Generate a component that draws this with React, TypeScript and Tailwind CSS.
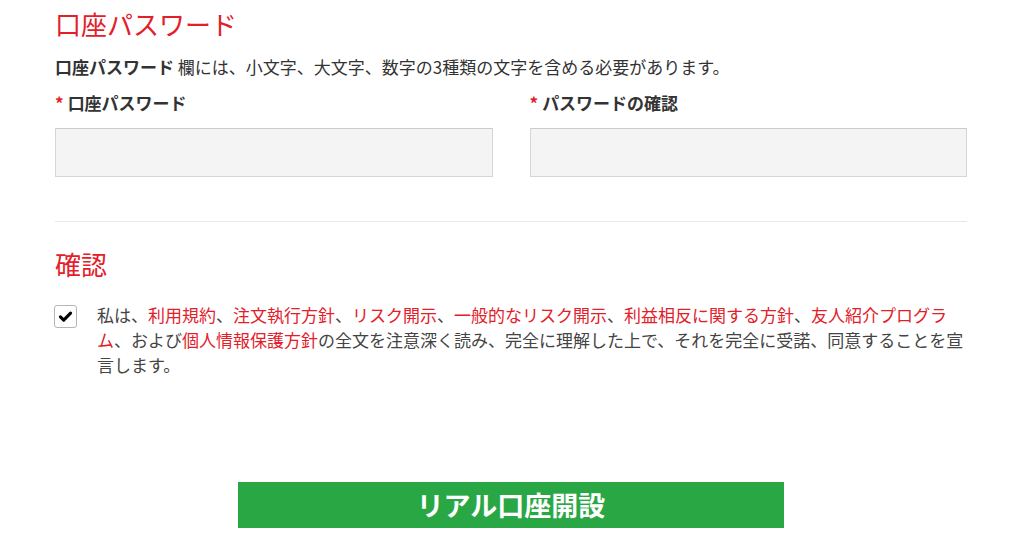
const LINKS_LINE = [
  { text: '私は、', link: false },
  { text: '利用規約', link: true },
  { text: '、', link: false },
  { text: '注文執行方針', link: true },
  { text: '、', link: false },
  { text: 'リスク開示', link: true },
  { text: '、', link: false },
  { text: '一般的なリスク開示', link: true },
  { text: '、', link: false },
  { text: '利益相反に関する方針', link: true },
  { text: '、', link: false },
  { text: '友人紹介プログラム', link: true },
  { text: '、および', link: false },
  { text: '個人情報保護方針', link: true },
  { text: 'の全文を注意深く読み、完全に理解した上で、それを完全に受諾、同意することを宣言します。', link: false },
];

function Field({ label }: { label: string }) {
  return (
    <label className="flex flex-col">
      <span className="text-[17px] leading-[25px] font-bold text-[#333]">
        <span className="mr-[4px] text-[#e3202a]">*</span>
        {label}
      </span>
      <input
        type="password"
        className="mt-[13px] h-[49px] w-full border border-[#d6d6d6] border-t-[#cccccc] bg-[#f4f4f4] px-3 outline-none"
      />
    </label>
  );
}

export default function App() {
  return (
    <div className="min-h-[533px] bg-white font-['Noto_Sans_CJK_JP','Noto_Sans',sans-serif]">
      <div className="ml-[55px] w-[912px] pt-[6px]">
        <h2 className="text-[26px] leading-[36px] font-normal text-[#e3202a]">口座パスワード</h2>
        <p className="mt-[12px] text-[17px] leading-[25px] text-[#333]">
          <span className="font-bold">口座パスワード</span> 欄には、小文字、大文字、数字の3種類の文字を含める必要があります。
        </p>

        <div className="mt-[11px] grid grid-cols-2 gap-[37px]">
          <Field label="口座パスワード" />
          <Field label="パスワードの確認" />
        </div>

        <div className="mt-[44px] border-t border-[#e8e8e8]" />

        <h2 className="mt-[24px] text-[26px] leading-[36px] font-normal text-[#e3202a]">確認</h2>

        <div className="mt-[20px] flex gap-[20px]">
          <div className="mt-[3px] -ml-px flex h-[23px] w-[23px] shrink-0 items-center justify-center rounded-[3px] border border-[#b5b5b5] bg-white">
            <svg viewBox="0 0 16 16" className="h-[15px] w-[15px]">
              <path d="M2.6 8.4 L6.1 11.8 L13.4 4.4" fill="none" stroke="#000" strokeWidth="3.3" strokeLinecap="round" strokeLinejoin="round" />
            </svg>
          </div>
          <p className="w-[869px] text-[17px] leading-[25px] text-[#444]">
            {LINKS_LINE.map((part, i) =>
              part.link ? (
                <a key={i} className="text-[#e3202a]">
                  {part.text}
                </a>
              ) : (
                <span key={i}>{part.text}</span>
              ),
            )}
          </p>
        </div>

        <div className="mt-[105px] flex justify-center">
          <button
            type="button"
            className="h-[46px] w-[546px] bg-[#29a745] text-[27px] leading-[46px] font-bold text-white"
          >
            リアル口座開設
          </button>
        </div>
      </div>
    </div>
  );
}
